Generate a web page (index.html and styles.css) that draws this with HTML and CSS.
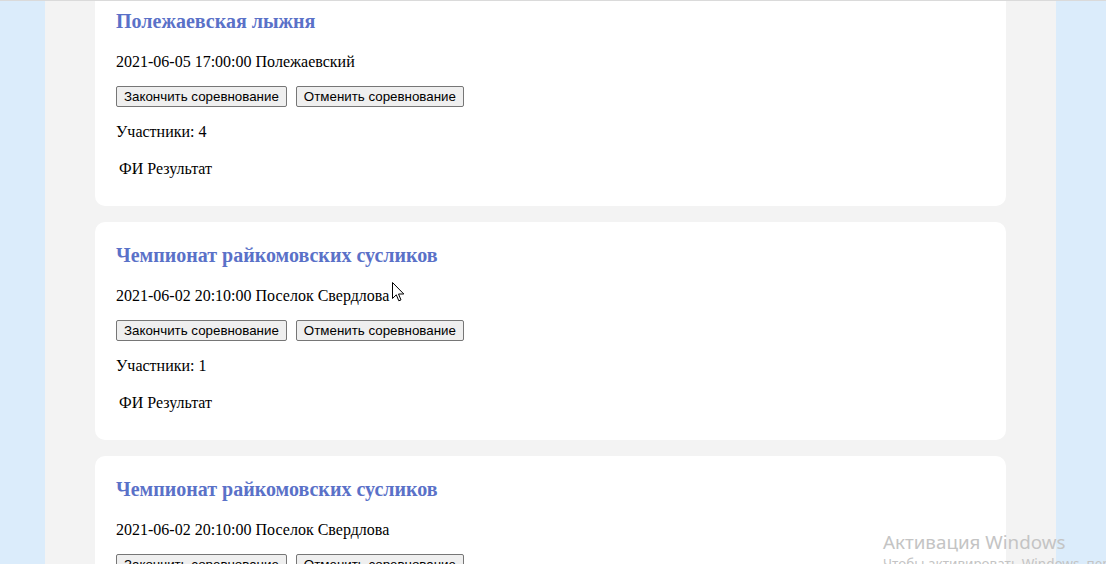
FILE: index.html
```html
<!DOCTYPE html>
<html lang="ru">
<head>
<meta charset="utf-8">
<title>Соревнования</title>
<link rel="stylesheet" href="styles.css">
</head>
<body>
<div class="page">
  <div class="card">
    <h3 class="title">Полежаевская лыжня</h3>
    <p class="line date">2021-06-05 17:00:00 Полежаевский</p>
    <div class="actions">
      <button class="btn">Закончить соревнование</button>
      <button class="btn">Отменить соревнование</button>
    </div>
    <p class="line count">Участники: 4</p>
    <table class="results"><tr><td>ФИ</td><td>Результат</td></tr></table>
  </div>
  <div class="card">
    <h3 class="title">Чемпионат райкомовских сусликов</h3>
    <p class="line date">2021-06-02 20:10:00 Поселок Свердлова</p>
    <div class="actions">
      <button class="btn">Закончить соревнование</button>
      <button class="btn">Отменить соревнование</button>
    </div>
    <p class="line count">Участники: 1</p>
    <table class="results"><tr><td>ФИ</td><td>Результат</td></tr></table>
  </div>
  <div class="card">
    <h3 class="title">Чемпионат райкомовских сусликов</h3>
    <p class="line date">2021-06-02 20:10:00 Поселок Свердлова</p>
    <div class="actions">
      <button class="btn">Закончить соревнование</button>
      <button class="btn">Отменить соревнование</button>
    </div>
    <p class="line count">Участники: 1</p>
    <table class="results"><tr><td>ФИ</td><td>Результат</td></tr></table>
  </div>
</div>
<div class="watermark">
  <div class="wm-title">Активация Windows</div>
  <div class="wm-sub">Чтобы активировать Windows, перейдите в раздел «Параметры».</div>
</div>
<svg class="cursor" width="13" height="20" viewBox="0 0 13 20"><path d="M0.5 0.5 L0.5 16.5 L4.3 12.8 L6.8 18.8 L9 17.9 L6.5 12 L11.8 12 Z" fill="#fff" stroke="#000" stroke-width="1" stroke-linejoin="miter"/></svg>
</body>
</html>
```
FILE: styles.css
```css
html, body {
  margin: 0;
  padding: 0;
  height: 100%;
  overflow: hidden;
}
body {
  background: #dbecfb;
  border-top: 1px solid #dadada;
  font-family: "Liberation Serif", "Times New Roman", serif;
  color: #000;
  position: relative;
}
.page {
  width: 911px;
  margin: -13px 0 0 45px;
  padding: 0 50px;
  background: #f3f3f3;
  min-height: 700px;
}
.card {
  background: #fff;
  border-radius: 10px;
  padding: 22px 21px 25px;
  margin-bottom: 16px;
}
.title {
  margin: 0;
  font-size: 20px;
  line-height: 22px;
  font-weight: bold;
  color: #5a71c8;
}
.line {
  margin: 0;
  font-size: 16px;
  line-height: 18px;
}
.date { margin-top: 21px; }
.actions {
  margin-top: 15px;
  display: flex;
  gap: 9px;
}
.btn {
  font-family: "Liberation Sans", Arial, sans-serif;
  font-size: 13.33px;
  line-height: 15px;
  height: 21px;
  padding: 1px 7px;
  background: #efefef;
  border: 1px solid #767676;
  border-radius: 2px;
  color: #000;
}
.count { margin-top: 16px; }
.results {
  margin-top: 16px;
  border-spacing: 2px;
  font-size: 16px;
  line-height: 18px;
}
.results td { padding: 1px; }
.watermark {
  position: absolute;
  left: 883px;
  top: 528px;
  font-family: "Noto Sans", "Open Sans", sans-serif;
  color: #c4c4c4;
  white-space: nowrap;
}
.wm-title { font-size: 18.8px; line-height: 26px; }
.wm-sub { font-size: 13.5px; line-height: 18px; }
.cursor {
  position: absolute;
  left: 392px;
  top: 281px;
}
```
